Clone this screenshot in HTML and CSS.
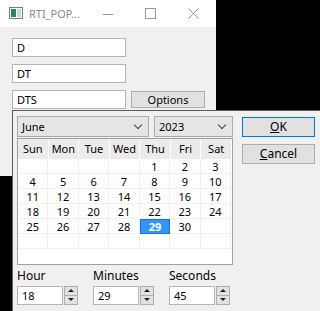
FILE: index.html
```html
<!DOCTYPE html>
<html>
<head>
    <meta charset="utf-8">
    <title>RTI_POPUP</title>
    <link rel="stylesheet" href="styles.css">
</head>
<body>

    <div class="window">
        <div class="titlebar">
            <svg class="appicon" width="14" height="12" viewBox="0 0 14 12">
                <rect x="0.5" y="0.5" width="13" height="11" fill="#fff" stroke="#7a7a7a"/>
                <rect x="2" y="2" width="5" height="8" fill="#2a8a4a"/>
                <rect x="2" y="2" width="5" height="3" fill="#3a6fb0"/>
                <rect x="8" y="2" width="4" height="8" fill="#c8d4e4"/>
            </svg>
            <span class="title">RTI_POP...</span>
            <span class="caption-btns">
                <svg width="12" height="12" viewBox="0 0 12 12"><line x1="0.5" y1="6.5" x2="11.5" y2="6.5" stroke="#9a9a9a"/></svg>
                <svg width="12" height="12" viewBox="0 0 12 12"><rect x="0.5" y="0.5" width="10" height="10" fill="none" stroke="#9a9a9a"/></svg>
                <svg width="12" height="12" viewBox="0 0 12 12"><path d="M0.5 0.5 L10.5 10.5 M10.5 0.5 L0.5 10.5" stroke="#9a9a9a"/></svg>
            </span>
        </div>
        <div class="winbody">
            <div class="edit">D</div>
            <div class="edit">DT</div>
            <div class="row">
                <div class="edit">DTS</div>
                <div class="btn options">Options</div>
            </div>
        </div>
    </div>

    <div class="popup">
        <div class="left">
            <div class="combos">
                <div class="combo month">June<span class="chev"></span></div>
                <div class="combo year">2023<span class="chev"></span></div>
            </div>
            <div class="cal">
                <div class="cal-head">
                    <div>Sun</div><div>Mon</div><div>Tue</div><div>Wed</div><div>Thu</div><div>Fri</div><div>Sat</div>
                </div>
                <div class="cal-body">
                    <div></div><div></div><div></div><div></div><div>1</div><div>2</div><div>3</div>
                    <div>4</div><div>5</div><div>6</div><div>7</div><div>8</div><div>9</div><div>10</div>
                    <div>11</div><div>12</div><div>13</div><div>14</div><div>15</div><div>16</div><div>17</div>
                    <div>18</div><div>19</div><div>20</div><div>21</div><div>22</div><div>23</div><div>24</div>
                    <div>25</div><div>26</div><div>27</div><div>28</div><div class="sel">29</div><div>30</div><div></div>
                    <div></div><div></div><div></div><div></div><div></div><div></div><div></div>
                </div>
            </div>
            <div class="times">
                <div class="tgroup">
                    <div class="tlabel">Hour</div>
                    <div class="spin"><div class="edit small">18</div><div class="arrows"><span class="up"></span><span class="dn"></span></div></div>
                </div>
                <div class="tgroup">
                    <div class="tlabel">Minutes</div>
                    <div class="spin"><div class="edit small">29</div><div class="arrows"><span class="up"></span><span class="dn"></span></div></div>
                </div>
                <div class="tgroup">
                    <div class="tlabel">Seconds</div>
                    <div class="spin"><div class="edit small">45</div><div class="arrows"><span class="up"></span><span class="dn"></span></div></div>
                </div>
            </div>
        </div>
        <div class="right">
            <div class="btn ok"><u>O</u>K</div>
            <div class="btn cancel"><u>C</u>ancel</div>
        </div>
    </div>

</body>
</html>
```

FILE: styles.css
```css
html, body {
    margin: 0;
    height: 100%;
}
body {
    background: #000;
    font-family: "Noto Sans", "Open Sans", sans-serif;
    font-size: 11px;
    color: #000;
    position: relative;
    overflow: hidden;
}
.window {
    width: 216px;
    height: 176px;
    background: #f0f0f0;
}
.titlebar {
    height: 27px;
    background: #fff;
    display: flex;
    align-items: center;
}
.appicon {
    margin-left: 9px;
    margin-top: -1px;
}
.title {
    margin-left: 6px;
    color: #8a8a8a;
}
.caption-btns {
    display: flex;
    gap: 31px;
    margin-left: 22px;
}
.winbody {
    padding: 11px 0 0 12px;
}
.edit {
    width: 114px;
    height: 19px;
    box-sizing: border-box;
    background: #fff;
    border: 1px solid #b4b4b4;
    padding-left: 4px;
    line-height: 17px;
    margin-bottom: 7px;
}
.row {
    display: flex;
    gap: 5px;
}
.btn {
    box-sizing: border-box;
    background: #e1e1e1;
    border: 1px solid #adadad;
    text-align: center;
}
.options {
    width: 74px;
    height: 17px;
    line-height: 15px;
    margin-top: 1px;
}

.popup {
    position: absolute;
    left: 12px;
    top: 110px;
    right: 0;
    bottom: 0;
    background: #f0f0f0;
    border-top: 1px solid #5a5a5a;
    border-left: 1px solid #5a5a5a;
    display: flex;
    padding: 5px 0 0 4px;
}
.left {
    width: 216px;
}
.combos {
    display: flex;
    gap: 5px;
    height: 21px;
}
.combo {
    position: relative;
    box-sizing: border-box;
    height: 21px;
    background: #e5e5e5;
    border: 1px solid #acacac;
    padding-left: 4px;
    line-height: 19px;
}
.month { width: 132px; }
.year { width: 79px; }
.chev {
    position: absolute;
    right: 7px;
    top: 5px;
    width: 5px;
    height: 5px;
    border-right: 1px solid #444;
    border-bottom: 1px solid #444;
    transform: rotate(45deg);
}

.cal {
    margin-top: 1px;
    height: 127px;
    box-sizing: border-box;
    border: 1px solid #a0a0a0;
    background: #fff;
}
.cal-head {
    display: grid;
    grid-template-columns: repeat(7, 1fr);
    gap: 1px;
    height: 20px;
    padding: 0 1px 0 0;
}
.cal-head div {
    background: #ebebeb;
    text-align: center;
    line-height: 19px;
}
.cal-body {
    display: grid;
    grid-template-columns: repeat(7, 1fr);
    grid-auto-rows: 15px;
    padding-right: 1px;
}
.cal-body div {
    text-align: center;
    line-height: 15px;
    border-right: 1px solid #f0f0f0;
    border-bottom: 1px solid #f0f0f0;
    box-sizing: border-box;
}
.cal-body .sel {
    background: #3396f7;
    border: 1px solid #1a6fd0;
    color: #fff;
    font-weight: bold;
    line-height: 13px;
}

.times {
    display: flex;
    gap: 15px;
    margin-top: 3px;
}
.tlabel {
    height: 18px;
    line-height: 16px;
    font-size: 12px;
}
.spin {
    display: flex;
    gap: 1px;
}
.edit.small {
    width: 46px;
    margin: 0;
}
.arrows {
    width: 14px;
    height: 19px;
    display: flex;
    flex-direction: column;
}
.arrows span {
    flex: 1;
    position: relative;
    background: #e1e1e1;
    border: 1px solid #adadad;
}
.arrows .dn {
    border-top: none;
}
.arrows .up::after, .arrows .dn::after {
    content: "";
    position: absolute;
    left: 3px;
    width: 0;
    height: 0;
    border-left: 3px solid transparent;
    border-right: 3px solid transparent;
}
.arrows .up::after {
    top: 2px;
    border-bottom: 3px solid #222;
}
.arrows .dn::after {
    top: 2px;
    border-top: 3px solid #222;
}

.right {
    margin-left: 9px;
    padding-top: 1px;
    display: flex;
    flex-direction: column;
    gap: 7px;
}
.right .btn {
    width: 73px;
    height: 20px;
    line-height: 18px;
    font-size: 12px;
}
.ok {
    border-color: #0078d7 !important;
}
```
